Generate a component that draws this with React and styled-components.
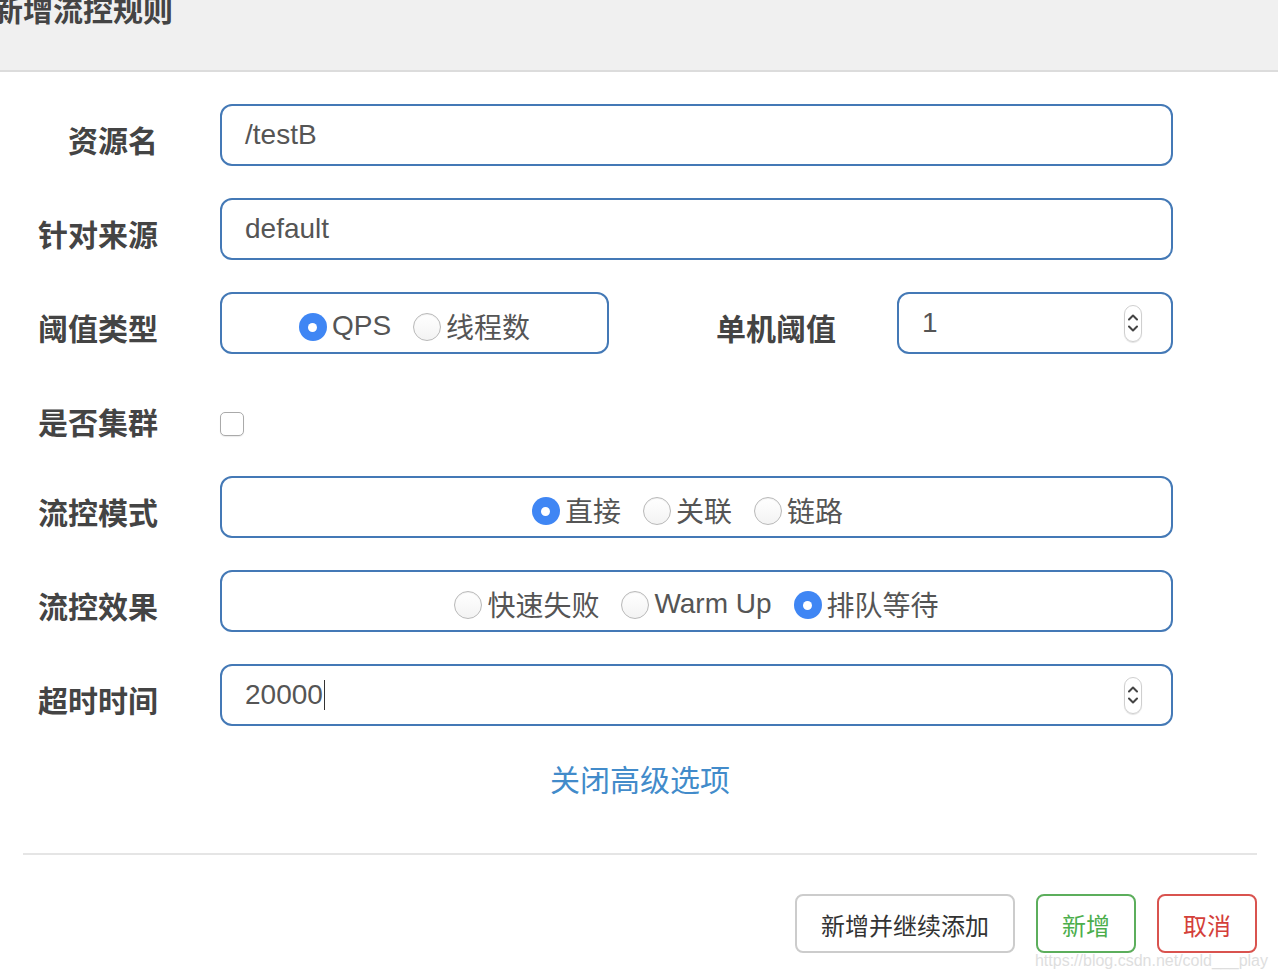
import React from "react";
import styled, { createGlobalStyle } from "styled-components";

const GlobalStyle = createGlobalStyle`
  html, body {
    margin: 0;
    padding: 0;
    background: #fff;
    overflow: hidden;
  }
  body {
    font-family: "Liberation Sans", "Noto Sans CJK SC", sans-serif;
  }
`;

const BORDER_BLUE = "#4479b6";
const RADIO_BLUE = "#3f86f4";

const Modal = styled.div`
  position: relative;
  width: 1278px;
  height: 978px;
  overflow: hidden;
`;

const Header = styled.div`
  height: 70px;
  background: #f0f0f0;
  border-bottom: 2px solid #dcdcdc;
  overflow: hidden;
`;

const Title = styled.h4`
  margin: -7px 0 0 -7px;
  font-family: "Noto Sans CJK SC", sans-serif;
  font-size: 30px;
  line-height: 30px;
  font-weight: 700;
  color: #444;
`;

const Body = styled.div`
  padding-top: 32px;
`;

const Row = styled.div`
  display: flex;
  align-items: center;
  height: ${(p) => p.$h || 62}px;
  margin-bottom: 32px;
`;

const Label = styled.div`
  width: ${(p) => p.$w || 158}px;
  flex: none;
  text-align: right;
  font-family: "Noto Sans CJK SC", sans-serif;
  font-size: 30px;
  line-height: 30px;
  font-weight: 700;
  color: #444;
  margin-top: ${(p) => p.$mt ?? 7}px;
`;

const Control = styled.div`
  margin-left: ${(p) => p.$ml ?? 62}px;
  width: ${(p) => p.$w || 953}px;
  flex: none;
  display: flex;
  align-items: center;
`;

const Field = styled.div`
  box-sizing: border-box;
  width: 100%;
  height: 62px;
  border: 2px solid ${BORDER_BLUE};
  border-radius: 12px;
  display: flex;
  align-items: center;
  justify-content: flex-start;
  padding: 0 29px 0 23px;
  font-size: 28px;
  color: #555;
`;

const ChoiceField = styled(Field)`
  justify-content: center;
  padding: 6px ${(p) => p.$pr || 0}px 0 0;
`;

const Value = styled.span`
  flex: 1;
  display: flex;
  align-items: center;
`;

const Caret = styled.span`
  display: inline-block;
  width: 1px;
  height: 30px;
  background: #333;
  margin-left: 1px;
`;

const Spinner = styled.span`
  box-sizing: border-box;
  width: 18px;
  height: 37px;
  border: 1px solid #cfcfcf;
  border-radius: 9px;
  box-shadow: 0 1px 1px rgba(0, 0, 0, 0.12);
  display: flex;
  flex-direction: column;
  align-items: center;
  justify-content: center;
  gap: 4px;
`;

const RadioItem = styled.label`
  display: flex;
  align-items: center;
  margin-right: 22px;
  font-size: 28px;
  color: #555;
  &:last-child {
    margin-right: 0;
  }
`;

const RadioDot = styled.span`
  box-sizing: border-box;
  width: 28px;
  height: 28px;
  border-radius: 50%;
  margin-right: 5px;
  margin-top: 2px;
  flex: none;
  display: flex;
  align-items: center;
  justify-content: center;
  background: ${(p) => (p.$on ? RADIO_BLUE : "linear-gradient(#fff, #f3f3f3)")};
  border: ${(p) => (p.$on ? "none" : "1px solid #b9b9b9")};
  box-shadow: ${(p) => (p.$on ? "none" : "inset 0 1px 1px rgba(0,0,0,0.06)")};
  &::after {
    content: "";
    display: ${(p) => (p.$on ? "block" : "none")};
    width: 9px;
    height: 9px;
    border-radius: 50%;
    background: #fff;
  }
`;

const Checkbox = styled.span`
  box-sizing: border-box;
  width: 24px;
  height: 24px;
  margin-top: 18px;
  border: 1px solid #aaa;
  border-radius: 5px;
  background: #fff;
  box-shadow: 0 1px 1px rgba(0, 0, 0, 0.08);
`;

const LinkRow = styled.div`
  display: flex;
  justify-content: center;
  margin-top: -2px;
  padding-left: 2px;
`;

const Link = styled.a`
  font-family: "Noto Sans CJK SC", sans-serif;
  font-size: 30px;
  line-height: 44px;
  color: #428bca;
  text-decoration: none;
`;

const Footer = styled.div`
  margin: 53px 21px 0 23px;
  border-top: 2px solid #e5e5e5;
  padding-top: 39px;
  display: flex;
  justify-content: flex-end;
  gap: 21px;
`;

const Button = styled.button`
  box-sizing: border-box;
  height: 59px;
  min-width: ${(p) => p.$w}px;
  padding: 2px 24px 0;
  background: #fff;
  border: 2px solid ${(p) => p.$border};
  border-radius: 8px;
  color: ${(p) => p.$color};
  font-family: "Noto Sans CJK SC", sans-serif;
  font-size: 24px;
  line-height: 1;
`;

const Watermark = styled.div`
  position: absolute;
  right: 10px;
  bottom: 8px;
  font-family: "Liberation Sans", sans-serif;
  font-size: 16px;
  color: #dedede;
`;

function Radio({ on, children }) {
  return (
    <RadioItem>
      <RadioDot $on={on} />
      {children}
    </RadioItem>
  );
}

function SpinIcon() {
  return (
    <Spinner>
      <svg width="10" height="7" viewBox="0 0 10 7">
        <path d="M1 5.5 L5 1.5 L9 5.5" fill="none" stroke="#444" strokeWidth="2" strokeLinecap="round" strokeLinejoin="round" />
      </svg>
      <svg width="10" height="7" viewBox="0 0 10 7">
        <path d="M1 1.5 L5 5.5 L9 1.5" fill="none" stroke="#444" strokeWidth="2" strokeLinecap="round" strokeLinejoin="round" />
      </svg>
    </Spinner>
  );
}

export default function App() {
  return (
    <>
      <GlobalStyle />
      <Modal>
        <Header>
          <Title>新增流控规则</Title>
        </Header>
        <Body>
          <Row>
            <Label>资源名</Label>
            <Control>
              <Field>
                <Value>/testB</Value>
              </Field>
            </Control>
          </Row>
          <Row>
            <Label>针对来源</Label>
            <Control>
              <Field>
                <Value>default</Value>
              </Field>
            </Control>
          </Row>
          <Row>
            <Label>阈值类型</Label>
            <Control $w={389}>
              <ChoiceField>
                <Radio on>QPS</Radio>
                <Radio>线程数</Radio>
              </ChoiceField>
            </Control>
            <Label $w={227}>单机阈值</Label>
            <Control $ml={61} $w={276}>
              <Field>
                <Value>1</Value>
                <SpinIcon />
              </Field>
            </Control>
          </Row>
          <Row $h={58}>
            <Label $mt={11}>是否集群</Label>
            <Control>
              <Checkbox />
            </Control>
          </Row>
          <Row>
            <Label>流控模式</Label>
            <Control>
              <ChoiceField $pr={18}>
                <Radio on>直接</Radio>
                <Radio>关联</Radio>
                <Radio>链路</Radio>
              </ChoiceField>
            </Control>
          </Row>
          <Row>
            <Label>流控效果</Label>
            <Control>
              <ChoiceField>
                <Radio>快速失败</Radio>
                <Radio>Warm Up</Radio>
                <Radio on>排队等待</Radio>
              </ChoiceField>
            </Control>
          </Row>
          <Row>
            <Label>超时时间</Label>
            <Control>
              <Field>
                <Value>
                  20000
                  <Caret />
                </Value>
                <SpinIcon />
              </Field>
            </Control>
          </Row>
          <LinkRow>
            <Link href="#">关闭高级选项</Link>
          </LinkRow>
          <Footer>
            <Button $w={219} $border="#cccccc" $color="#333">
              新增并继续添加
            </Button>
            <Button $w={99} $border="#5cae5c" $color="#4cae4c">
              新增
            </Button>
            <Button $w={99} $border="#d9534f" $color="#d43f3a">
              取消
            </Button>
          </Footer>
        </Body>
        <Watermark>https://blog.csdn.net/cold___play</Watermark>
      </Modal>
    </>
  );
}
